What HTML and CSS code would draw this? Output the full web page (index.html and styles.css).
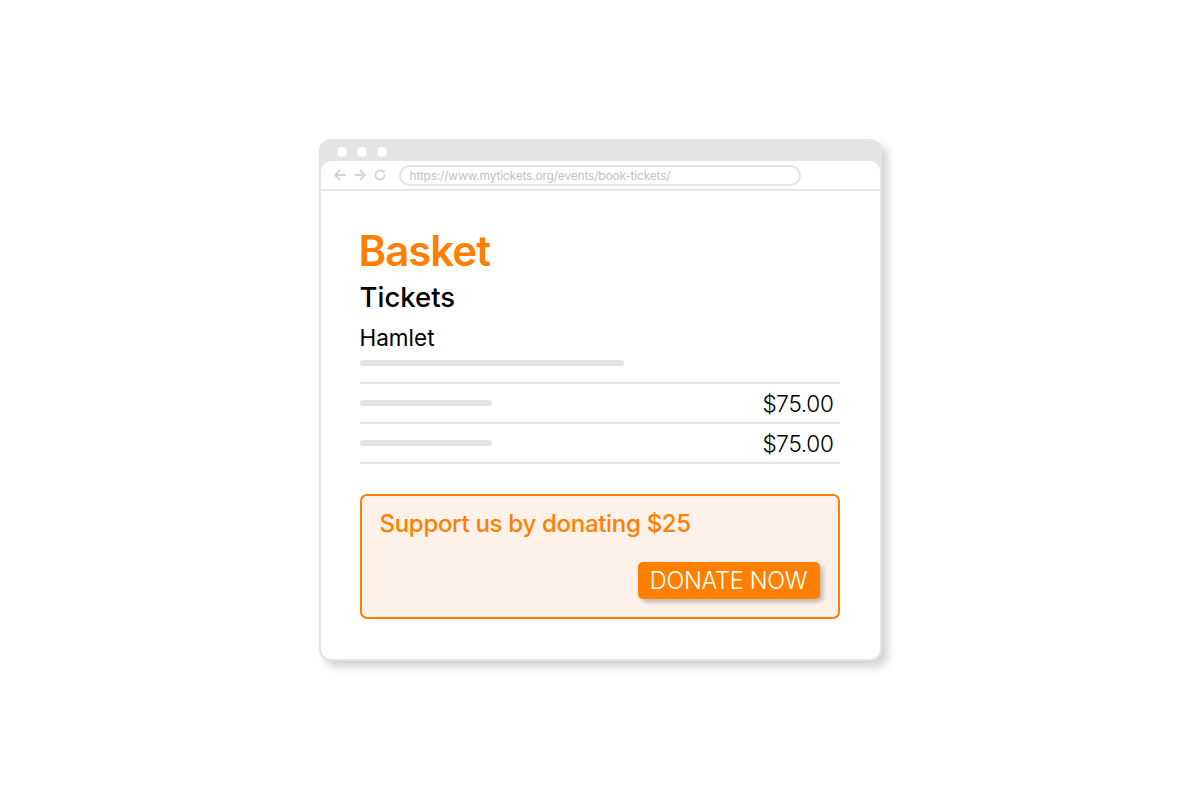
FILE: index.html
```html
<!DOCTYPE html>
<html>
<head>
<meta charset="utf-8">
<link rel="stylesheet" href="styles.css">
</head>
<body>
<div class="window">
  <div class="titlebar">
    <span class="dot"></span><span class="dot"></span><span class="dot"></span>
  </div>
  <div class="inner">
    <div class="toolbar">
      <svg class="nav" width="14" height="14" viewBox="0 0 14 14"><path d="M12 7H2M6.5 2.5L2 7l4.5 4.5" fill="none" stroke="#d4d4d4" stroke-width="1.8" stroke-linecap="round" stroke-linejoin="round"/></svg>
      <svg class="nav" width="14" height="14" viewBox="0 0 14 14"><path d="M2 7h10M7.5 2.5L12 7l-4.5 4.5" fill="none" stroke="#d4d4d4" stroke-width="1.8" stroke-linecap="round" stroke-linejoin="round"/></svg>
      <svg class="nav" width="14" height="14" viewBox="0 0 14 14"><path d="M11.5 7A4.5 4.5 0 1 1 10 3.6" fill="none" stroke="#d4d4d4" stroke-width="1.8" stroke-linecap="round"/><path d="M8.5 1.8l3.2 0.4-0.6 3.2z" fill="#d4d4d4"/></svg>
      <div class="url">https://www.mytickets.org/events/book-tickets/</div>
    </div>
    <div class="content">
      <h1 class="title">Basket</h1>
      <h2 class="subtitle">Tickets</h2>
      <div class="show">Hamlet</div>
      <div class="bar bar-long"></div>
      <div class="rows">
        <div class="row"><div class="bar bar-short"></div><div class="price">$75.00</div></div>
        <div class="row"><div class="bar bar-short"></div><div class="price">$75.00</div></div>
      </div>
      <div class="donate">
        <div class="donate-text">Support us by donating $25</div>
        <div class="donate-actions"><button class="btn">DONATE NOW</button></div>
      </div>
    </div>
  </div>
</div>
</body>
</html>
```

FILE: styles.css
```css
* { box-sizing: border-box; }
html, body { margin: 0; padding: 0; }
body {
  background: #ffffff;
  height: 800px;
  display: flex;
  align-items: center;
  justify-content: center;
  font-family: "Inter", "Lato", sans-serif;
}
.window {
  width: 563px;
  height: 522px;
  background: #e4e4e4;
  border-radius: 12px;
  padding: 0 2px 2px 2px;
  display: flex;
  flex-direction: column;
  box-shadow: 6px 6px 8px rgba(0,0,0,0.18);
}
.titlebar {
  height: 22px;
  display: flex;
  align-items: center;
  gap: 10px;
  padding-left: 16px;
  padding-top: 3px;
}
.dot {
  width: 10px;
  height: 10px;
  border-radius: 50%;
  background: #ffffff;
}
.inner {
  flex: 1;
  background: #ffffff;
  border-radius: 10px;
  display: flex;
  flex-direction: column;
}
.toolbar {
  height: 30px;
  border-bottom: 2px solid #e4e4e4;
  display: flex;
  align-items: center;
  padding-left: 12px;
  gap: 6px;
}
.nav { display: block; }
.url {
  margin-left: 6px;
  width: 402px;
  height: 21px;
  border: 2px solid #e4e4e4;
  border-radius: 11px;
  font-size: 12px;
  color: #c2c2c2;
  padding-left: 9px;
  line-height: 17px;
  letter-spacing: -0.2px;
  font-family: "Inter", "Liberation Sans", sans-serif;
}
.content {
  padding: 35px 40px 0 39px;
}
.title {
  margin: 0 0 0 -1px;
  font-size: 42px;
  font-weight: 600;
  color: #ff8000;
  line-height: 50px;
  letter-spacing: -1px;
}
.subtitle {
  margin: 3px 0 0 0;
  font-size: 27.5px;
  font-weight: 500;
  color: #000;
  line-height: 36px;
  letter-spacing: 0;
}
.show {
  margin-top: 8px;
  font-size: 22.5px;
  font-weight: 400;
  color: #000;
  line-height: 30px;
}
.bar {
  height: 6px;
  border-radius: 3px;
  background: #e4e4e4;
}
.bar-long { width: 264px; margin-top: 7px; }
.bar-short { width: 132px; }
.rows {
  margin-top: 16px;
  border-top: 2px solid #e4e4e4;
}
.row {
  height: 40px;
  border-bottom: 2px solid #e4e4e4;
  display: flex;
  align-items: center;
  justify-content: space-between;
}
.price {
  font-size: 22.5px;
  font-weight: 350;
  color: #000;
  letter-spacing: -0.3px;
  margin-right: 6px;
}
.donate {
  margin-top: 30px;
  height: 125px;
  border: 2px solid #ff8000;
  border-radius: 7px;
  background: #fdf1ea;
  padding: 13px 18px 0 18px;
}
.donate-text {
  font-size: 24px;
  font-weight: 500;
  color: #ff8000;
  line-height: 30px;
  letter-spacing: -0.3px;
}
.donate-actions {
  display: flex;
  justify-content: flex-end;
  margin-top: 23px;
}
.btn {
  border: 0;
  background: #ff8000;
  color: #fff;
  font-family: "Inter", "Lato", sans-serif;
  font-size: 23.5px;
  font-weight: 350;
  height: 37px;
  width: 182px;
  border-radius: 5px;
  box-shadow: 3px 3px 5px rgba(0,0,0,0.25);
  padding: 0;
  letter-spacing: -0.3px;
}
```
